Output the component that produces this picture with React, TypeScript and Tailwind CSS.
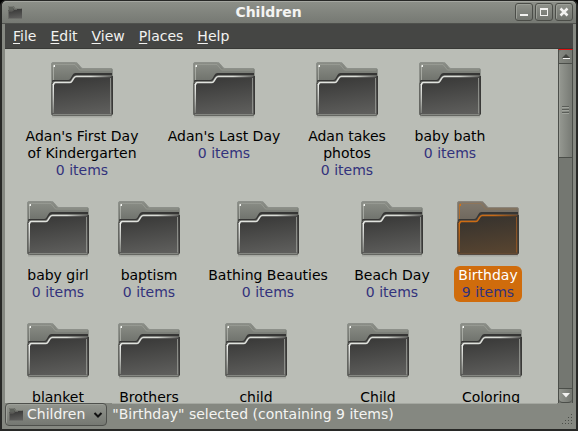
import React from "react";

type Folder = {
  lines: string[];
  count: string;
  width: string;
  selected?: boolean;
};

const rows: Folder[][] = [
  [
    { lines: ["Adan's First Day", "of Kindergarten"], count: "0 items", width: "w-[116px]" },
    { lines: ["Adan's Last Day"], count: "0 items", width: "w-[120px]" },
    { lines: ["Adan takes", "photos"], count: "0 items", width: "w-[78px]" },
    { lines: ["baby bath"], count: "0 items", width: "w-[80px]" },
  ],
  [
    { lines: ["baby girl"], count: "0 items", width: "w-[68px]" },
    { lines: ["baptism"], count: "0 items", width: "w-[66px]" },
    { lines: ["Bathing Beauties"], count: "0 items", width: "w-[124px]" },
    { lines: ["Beach Day"], count: "0 items", width: "w-[76px]" },
    { lines: ["Birthday"], count: "9 items", width: "w-[68px]", selected: true },
  ],
  [
    { lines: ["blanket"], count: "", width: "w-[68px]" },
    { lines: ["Brothers"], count: "", width: "w-[66px]" },
    { lines: ["child"], count: "", width: "w-[100px]" },
    { lines: ["Child"], count: "", width: "w-[96px]" },
    { lines: ["Coloring"], count: "", width: "w-[82px]" },
  ],
];

const menus = ["File", "Edit", "View", "Places", "Help"];

function FolderGradients() {
  return (
    <svg className="absolute size-0" aria-hidden="true">
      <defs>
        <linearGradient id="back" x1="0" y1="0" x2="0" y2="1">
          <stop offset="0" stopColor="#8b8e87" />
          <stop offset="0.35" stopColor="#70736d" />
        </linearGradient>
        <linearGradient id="front" x1="0.3" y1="0" x2="0.5" y2="1">
          <stop offset="0" stopColor="#373736" />
          <stop offset="1" stopColor="#5e5e5c" />
        </linearGradient>
        <linearGradient id="shine" x1="0" y1="0" x2="1" y2="0">
          <stop offset="0" stopColor="#e4e6e2" />
          <stop offset="0.65" stopColor="#d8dad5" />
          <stop offset="1" stopColor="#60605e" />
        </linearGradient>
        <linearGradient id="side" x1="0" y1="0" x2="0" y2="1">
          <stop offset="0" stopColor="#f0f2ee" />
          <stop offset="0.5" stopColor="#c0c2bd" />
          <stop offset="1" stopColor="#7b7d78" />
        </linearGradient>
        <linearGradient id="backSel" x1="0" y1="0" x2="0" y2="1">
          <stop offset="0" stopColor="#81796d" />
          <stop offset="0.35" stopColor="#6f685e" />
        </linearGradient>
        <linearGradient id="frontSel" x1="0.3" y1="0" x2="0.5" y2="1">
          <stop offset="0" stopColor="#35322e" />
          <stop offset="1" stopColor="#574430" />
        </linearGradient>
        <linearGradient id="shineSel" x1="0" y1="0" x2="1" y2="0">
          <stop offset="0" stopColor="#d06d12" />
          <stop offset="0.6" stopColor="#c56a18" />
          <stop offset="1" stopColor="#6a4526" />
        </linearGradient>
        <linearGradient id="sideSel" x1="0" y1="0" x2="0" y2="1">
          <stop offset="0" stopColor="#d06d12" />
          <stop offset="1" stopColor="#80502a" />
        </linearGradient>
      </defs>
    </svg>
  );
}

function FolderIcon({ selected: s = false }: { selected?: boolean }) {
  return (
    <svg viewBox="0 0 62 56" className="h-14 w-[62px]" aria-hidden="true">
      <path d="M1 54h60v1.500H1z" fill="#000" opacity="0.1" />
      <path
        d="M.5 52V2Q.5.5 2 .5H24.500Q26 .5 27 1.800L30 5.500Q30.700 6.500 32 6.500H60Q61.500 6.500 61.500 8V52Z"
        fill={s ? "url(#backSel)" : "url(#back)"}
        stroke={s ? "#8b857b" : "#8d908a"}
      />
      <path d="M2.500 3V2.500H24L28.500 8H60" fill="none" stroke={s ? "#97754f" : "#a0a39b"} opacity="0.6" />
      <path d="M2.500 4V18" stroke={s ? "#c9701d" : "#b9bcb5"} opacity="0.7" />
      <path d="M2.500 4h1.500" stroke={s ? "#d67415" : "#f4f5f2"} strokeWidth="2" />
      <path d="M1 19Q1 18 3 18H17Q18.500 18 19.500 16.500L21.500 13Q22.500 11 24.500 11H61V52H1Z" fill="#363635" />
      <path
        d="M.5 23Q.5 19.500 3 19.500H18Q19.500 19.500 20.500 18L22.500 15Q23.500 13.500 25 13.500H60Q61.500 13.500 61.500 15V51.500Q61.500 53.500 60 53.500H2.500Q.5 53.500 .5 51.500Z"
        fill={s ? "url(#frontSel)" : "url(#front)"}
        stroke={s ? "#574b40" : "#656762"}
      />
      <path
        d="M2.500 23Q2.500 20.500 4.500 20.500H18.500Q20 20.500 21 19L23 15.800Q23.800 14.500 25.500 14.500H60"
        fill="none"
        stroke={s ? "url(#shineSel)" : "url(#shine)"}
        strokeWidth="1.500"
      />
      <path d="M1.500 22H3v29H1.500z" fill={s ? "url(#sideSel)" : "url(#side)"} />
      <path d="M59.500 16v35.500" stroke={s ? "#8a5427" : "#8b8d88"} />
      <path d="M2 52.500H60" stroke={s ? "#644a32" : "#858782"} />
      <path d="M61.500 14V52" stroke="#3a3a38" />
    </svg>
  );
}

function SmallFolderIcon() {
  return (
    <svg viewBox="0 0 14 13" className="h-[13px] w-3.5 shrink-0" aria-hidden="true">
      <path d="M0 12V.5Q0 0 .5 0H5Q5.500 0 6 .6L7 2h6.500q.5 0 .5.5V12Z" fill="#5f625c" />
      <path d="M.5 4V.5H5L6.500 2.500H13.500" fill="none" stroke="#777a73" />
      <path d="M0 5.500Q0 4.500 1 4.500H4Q4.800 4.500 5.200 3.700Q5.500 3 6.500 3H14V12.500H0Z" fill="url(#front)" />
      <path d="M.5 12V5H4.500L6 3.500H9" fill="none" stroke="#6e706b" strokeWidth="0.800" />
    </svg>
  );
}

function FolderTile({ folder }: { folder: Folder }) {
  const { lines, count, width, selected } = folder;
  return (
    <button
      type="button"
      aria-pressed={!!selected}
      className={`flex shrink-0 flex-col items-center gap-[9px] whitespace-nowrap ${width}`}
    >
      <FolderIcon selected={selected} />
      <span
        className={
          selected
            ? "flex flex-col items-center rounded-md bg-[#d06c0c] px-1 py-px text-white"
            : "flex flex-col items-center px-1 py-px text-black"
        }
      >
        {lines.map((line) => (
          <span key={line}>{line}</span>
        ))}
        {count && <span className="text-[#32327c]">{count}</span>}
      </span>
    </button>
  );
}

function WindowButton({ label, children }: { label: string; children: React.ReactNode }) {
  return (
    <button
      type="button"
      aria-label={label}
      className="flex size-[18px] items-center justify-center rounded-[3px] border border-[#4b4d48] bg-linear-to-b from-[#8e918a] to-[#72756f] text-[#f2f2f0] shadow-[inset_1px_1px_0_#9b9e97]"
    >
      {children}
    </button>
  );
}

function Scrollbar() {
  return (
    <div className="flex w-[15px] shrink-0 flex-col border-x border-t border-[#4b4e49] border-t-[#e01010] bg-[#747771]">
      <button
        type="button"
        aria-label="Scroll up"
        className="flex h-3.5 shrink-0 items-center justify-center rounded-t-sm border-b border-[#4b4e49] bg-linear-to-r from-[#858881] to-[#747771]"
      >
        <svg viewBox="0 0 8 6" className="h-1.5 w-2" aria-hidden="true">
          <path d="M4 0 8 4H0Z" fill="#434541" />
          <path d="M1 4.500H8" stroke="#f2f2f0" />
        </svg>
      </button>
      <div className="flex h-[94px] shrink-0 flex-col items-center border-b border-[#4b4e49] bg-linear-to-r from-[#969992] to-[#777a74] pt-[42px] shadow-[inset_1px_0_0_#9da099]">
        <svg viewBox="0 0 7 9" className="h-[9px] w-[7px]" aria-hidden="true">
          <path d="M0 .5h7M0 3.500h7M0 6.500h7" stroke="#5a5d58" />
          <path d="M0 1.500h7M0 4.500h7M0 7.500h7" stroke="#a1a49d" />
        </svg>
      </div>
      <div className="flex-1" />
      <button
        type="button"
        aria-label="Scroll down"
        className="flex h-[15px] shrink-0 items-center justify-center rounded-b-sm border-y border-[#4b4e49] bg-linear-to-r from-[#92958e] to-[#747771]"
      >
        <svg viewBox="0 0 8 5" className="h-[5px] w-2" aria-hidden="true">
          <path d="M0 0H8L4 4.500Z" fill="#f2f2f0" />
        </svg>
      </button>
    </div>
  );
}

export default function App() {
  return (
    <div className="h-screen bg-black font-['DejaVu_Sans',sans-serif] text-[14px] leading-[17px]">
      <FolderGradients />
      <div className="flex h-full flex-col rounded-t-md border-2 border-t border-[#272826] bg-[#858881]">
        <header className="flex h-[23px] shrink-0 items-center rounded-t-[5px] border-b border-t border-b-[#4f514d] border-t-[#a5a7a1] bg-linear-to-b from-[#8c8f88] to-[#767973] pb-px pl-1.5 pr-[3px]">
          <SmallFolderIcon />
          <h1 className="flex-1 text-center font-bold text-[#f4f4f2]">Children</h1>
          <div className="flex gap-0.5">
            <WindowButton label="Minimize">
              <svg viewBox="0 0 10 10" className="size-2.5" aria-hidden="true">
                <path d="M1 8h8" stroke="currentColor" strokeWidth="2" />
              </svg>
            </WindowButton>
            <WindowButton label="Maximize">
              <svg viewBox="0 0 10 10" className="size-2.5" aria-hidden="true">
                <path d="M1.500 1v8M8.500 1v8M1 8.500h8" stroke="currentColor" />
                <path d="M1 2h8" stroke="currentColor" strokeWidth="2" />
              </svg>
            </WindowButton>
            <WindowButton label="Close">
              <svg viewBox="0 0 10 10" className="size-2.5" aria-hidden="true">
                <path d="m1.500 1.500 7 7m0-7-7 7" stroke="currentColor" strokeWidth="2.500" />
              </svg>
            </WindowButton>
          </div>
        </header>

        <div className="flex min-h-0 flex-1 flex-col px-[3px] pb-0.5">
          <nav className="flex h-[25px] shrink-0 items-center gap-3.5 border-b border-[#383936] bg-[#454644] px-2 text-[#f2f2f0]">
            {menus.map((menu) => (
              <button key={menu} type="button">
                <span className="underline underline-offset-2">{menu[0]}</span>
                {menu.slice(1)}
              </button>
            ))}
          </nav>

          <div className="flex min-h-0 flex-1">
            <main className="flex min-w-0 flex-1 flex-col gap-[21px] overflow-hidden bg-[#babdb6] pl-[19px] pt-[13px]">
              {rows.map((row, index) => (
                <div key={index} className="flex items-start gap-6">
                  {row.map((folder) => (
                    <FolderTile key={folder.lines[0]} folder={folder} />
                  ))}
                </div>
              ))}
            </main>
            <Scrollbar />
          </div>

          <footer className="flex h-6 shrink-0 items-start gap-[5px] text-[#f4f4f2]">
            <button
              type="button"
              aria-haspopup="menu"
              className="flex h-[23px] shrink-0 items-center gap-1 rounded-[4px] border border-[#4e504c] bg-linear-to-b from-[#92958e] to-[#757872] px-[3px] shadow-[inset_1px_1px_0_#9da099]"
            >
              <SmallFolderIcon />
              <span>Children</span>
              <svg viewBox="0 0 10 6" className="ml-1 h-1.5 w-2.5" aria-hidden="true">
                <path d="m1.500 1 3.500 3.500L8.500 1" fill="none" stroke="#111" strokeWidth="2" />
              </svg>
            </button>
            <p className="h-full min-w-0 flex-1 truncate border-t border-[#a5a8a1] pt-0.5">
              "Birthday" selected (containing 9 items)
            </p>
            <svg viewBox="0 0 11 11" className="mb-0.5 size-[11px] shrink-0 self-end" aria-hidden="true">
              <path
                d="M9 0h1v1H9zM6 3h1v1H6zM9 3h1v1H9zM3 6h1v1H3zM6 6h1v1H6zM9 6h1v1H9zM0 9h1v1H0zM3 9h1v1H3zM6 9h1v1H6zM9 9h1v1H9z"
                fill="#4b4e49"
              />
            </svg>
          </footer>
        </div>
      </div>
    </div>
  );
}
